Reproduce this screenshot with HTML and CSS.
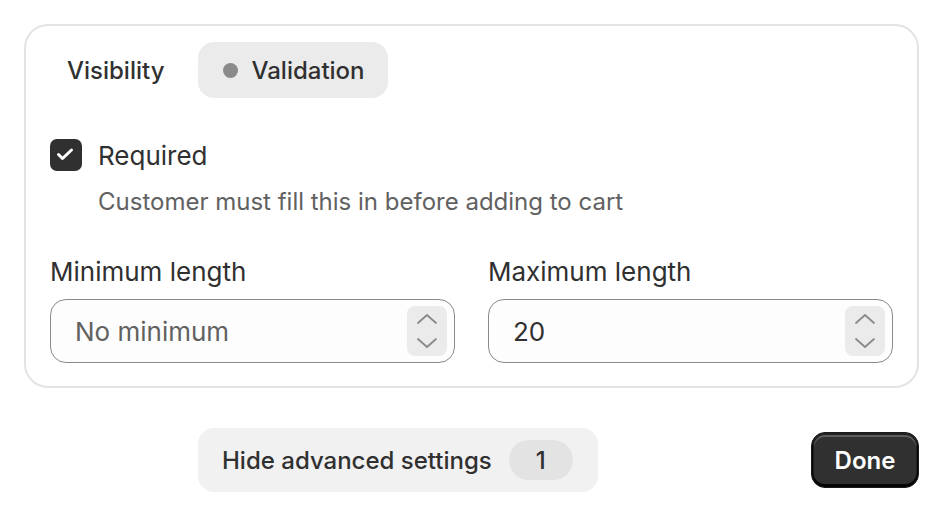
FILE: index.html
```html
<!DOCTYPE html>
<html lang="en">
<head>
<meta charset="utf-8">
<title>Validation settings</title>
<link rel="stylesheet" href="styles.css">
</head>
<body>
<div class="page">
  <section class="card">
    <div class="tabs">
      <button class="tab">Visibility</button>
      <button class="tab tab-active"><span class="dot"></span>Validation</button>
    </div>

    <div class="check-row">
      <span class="checkbox">
        <svg viewBox="0 0 32 32" width="32" height="32"><path d="M8.5 15.5l4 4L21.5 11" fill="none" stroke="#fff" stroke-width="3" stroke-linecap="round" stroke-linejoin="round"/></svg>
      </span>
      <span class="check-label">Required</span>
    </div>
    <p class="help">Customer must fill this in before adding to cart</p>

    <div class="fields">
      <div class="field">
        <label class="field-label">Minimum length</label>
        <div class="input">
          <span class="value placeholder">No minimum</span>
          <span class="stepper">
            <svg viewBox="0 0 22 12" width="22" height="12"><path d="M2 10l9-8 9 8" fill="none" stroke="#8a8a8a" stroke-width="1.8" stroke-linecap="round" stroke-linejoin="round"/></svg>
            <svg viewBox="0 0 22 12" width="22" height="12"><path d="M2 2l9 8 9-8" fill="none" stroke="#8a8a8a" stroke-width="1.8" stroke-linecap="round" stroke-linejoin="round"/></svg>
          </span>
        </div>
      </div>
      <div class="field">
        <label class="field-label">Maximum length</label>
        <div class="input">
          <span class="value">20</span>
          <span class="stepper">
            <svg viewBox="0 0 22 12" width="22" height="12"><path d="M2 10l9-8 9 8" fill="none" stroke="#8a8a8a" stroke-width="1.8" stroke-linecap="round" stroke-linejoin="round"/></svg>
            <svg viewBox="0 0 22 12" width="22" height="12"><path d="M2 2l9 8 9-8" fill="none" stroke="#8a8a8a" stroke-width="1.8" stroke-linecap="round" stroke-linejoin="round"/></svg>
          </span>
        </div>
      </div>
    </div>
  </section>

  <div class="footer">
    <button class="advanced">Hide advanced settings <span class="badge">1</span></button>
    <button class="done">Done</button>
  </div>
</div>
</body>
</html>
```

FILE: styles.css
```css
* { box-sizing: border-box; }
html, body { margin: 0; background: #ffffff; }
body {
  font-family: Inter, "Noto Sans", "Liberation Sans", sans-serif;
  color: #303030;
  width: 942px;
  height: 516px;
  overflow: hidden;
}
button { font-family: inherit; border: 0; cursor: pointer; }

.page {
  padding: 24px 23px 0 24px;
}

.card {
  border: 2px solid #e3e3e3;
  border-radius: 24px;
  padding: 16px 24px 24px 24px;
  height: 364px;
}

.tabs {
  display: flex;
  gap: 17px;
  height: 56px;
}
.tab {
  background: transparent;
  height: 56px;
  padding: 0 17px;
  border-radius: 16px;
  font-size: 24px;
  font-weight: 500;
  color: #303030;
  display: flex;
  align-items: center;
}
.tab-active {
  background: #ebebeb;
  padding: 0 23px 0 25px;
}
.dot {
  width: 15px;
  height: 15px;
  border-radius: 50%;
  background: #8a8a8a;
  margin-right: 13px;
}

.check-row {
  display: flex;
  align-items: center;
  gap: 16px;
  margin-top: 41px;
  height: 32px;
}
.checkbox {
  width: 32px;
  height: 32px;
  border-radius: 7px;
  background: #303030;
  display: flex;
  align-items: center;
  justify-content: center;
}
.check-label {
  font-size: 26px;
  color: #303030;
}
.help {
  margin: 15px 0 0 48px;
  font-size: 24px;
  color: #616161;
  line-height: 32px;
}

.fields {
  display: grid;
  grid-template-columns: 1fr 1fr;
  gap: 33px;
  margin-top: 38px;
}
.field { display: flex; flex-direction: column; }
.field-label {
  font-size: 26px;
  color: #303030;
  line-height: 32px;
  margin-bottom: 11px;
}
.input {
  height: 64px;
  border: 1.5px solid #8a8a8a;
  border-radius: 16px;
  background: #fdfdfd;
  display: flex;
  align-items: center;
  justify-content: space-between;
  padding: 0 7px 0 24px;
}
.value {
  font-size: 26px;
  color: #303030;
}
.placeholder { color: #616161; }
.stepper {
  width: 40px;
  height: 50px;
  border-radius: 8px;
  background: #ebebeb;
  display: flex;
  flex-direction: column;
  align-items: center;
  justify-content: center;
  gap: 12px;
}

.footer {
  display: flex;
  justify-content: space-between;
  align-items: center;
  margin-top: 40px;
  padding-left: 174px;
}
.advanced {
  height: 64px;
  width: 400px;
  border-radius: 16px;
  background: #f1f1f1;
  font-size: 24px;
  font-weight: 500;
  color: #303030;
  display: flex;
  align-items: center;
  padding: 0 24px;
}
.badge {
  margin-left: 17px;
  width: 64px;
  height: 40px;
  border-radius: 20px;
  background: #e3e3e3;
  display: inline-flex;
  align-items: center;
  justify-content: center;
  font-weight: 500;
}
.done {
  height: 56px;
  width: 108px;
  border-radius: 14px;
  background: #303030;
  color: #ffffff;
  font-size: 24px;
  font-weight: 600;
  box-shadow: inset 0 -2px 0 1px rgba(0,0,0,0.85), inset 0 0 0 2px #212121, inset 0 2px 0 2px rgba(255,255,255,0.22);
  border: 1px solid #1a1a1a;
}
```
